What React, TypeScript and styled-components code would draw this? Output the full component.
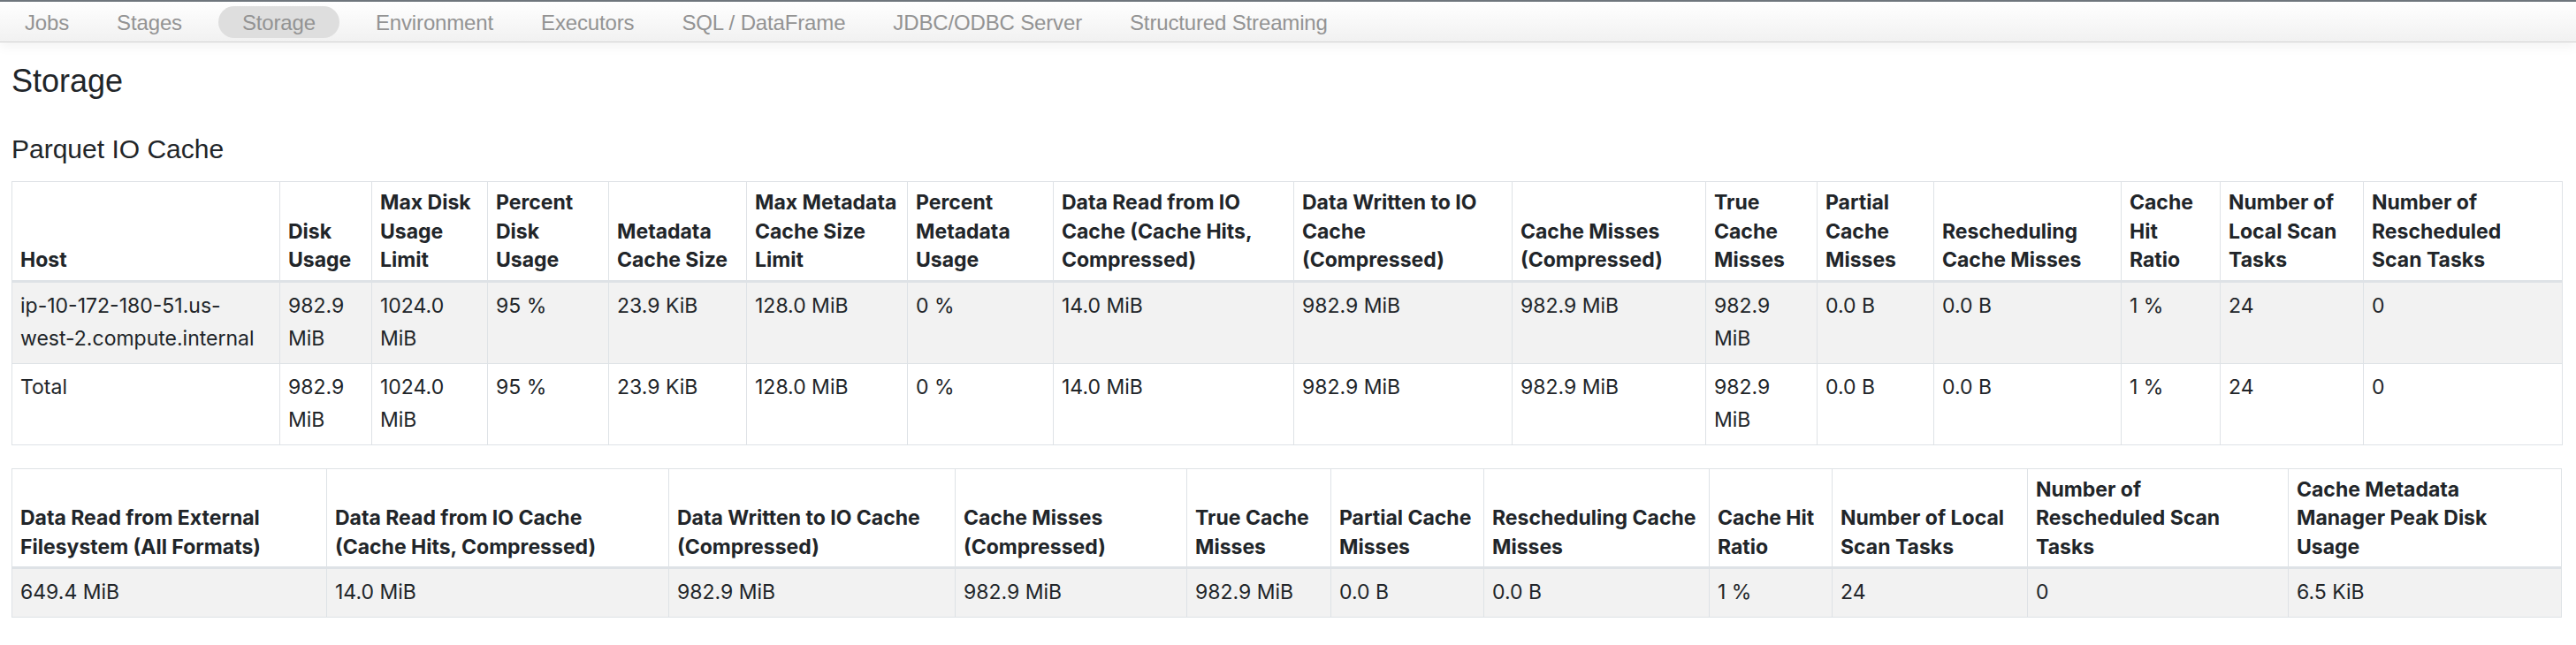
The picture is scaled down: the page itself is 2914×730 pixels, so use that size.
import React from "react";
import styled, { createGlobalStyle } from "styled-components";

const GlobalStyle = createGlobalStyle`
  html, body { margin: 0; padding: 0; background: #ffffff; }
  body { font-family: "Liberation Sans", Arial, sans-serif; color: #212529; }
`;

const TopBar = styled.nav`
  display: flex;
  align-items: center;
  height: 45px;
  padding-left: 1px;
  border-top: 2px solid #6f767d;
  border-bottom: 1px solid #d3d3d3;
  background: linear-gradient(to bottom, #ffffff 0%, #f1f1f1 100%);
  box-shadow: 0 5px 12px rgba(0, 0, 0, 0.05);
`;

const NavItem = styled.a<{ $active?: boolean }>`
  display: block;
  height: 36px;
  line-height: 38px;
  padding: 0 27px;
  margin: ${(p) => (p.$active ? "0 14px" : "0")};
  border-radius: 18px;
  background: ${(p) => (p.$active ? "#dedede" : "transparent")};
  font-family: "Liberation Sans", Arial, sans-serif;
  font-size: 24px;
  letter-spacing: -0.15px;
  color: #939393;
  text-decoration: none;
  white-space: nowrap;
`;

const Page = styled.main`
  padding: 0 16px 0 13px;
`;

const Title = styled.h3`
  margin: 22px 0 0;
  font-size: 36px;
  font-weight: 400;
  line-height: 43px;
`;

const SectionTitle = styled.h4`
  margin: 38px 0 18px;
  font-size: 30px;
  font-weight: 400;
  line-height: 36px;
`;

const DataTable = styled.table<{ $gap?: number }>`
  width: 100%;
  table-layout: fixed;
  border-collapse: collapse;
  border: 1px solid #dee2e6;
  margin-top: ${(p) => p.$gap ?? 0}px;
  font-family: Inter, "Noto Sans", sans-serif;
  font-size: 23px;
  color: #212529;
`;

const Col = styled.col<{ $w: number }>`
  width: ${(p) => p.$w}px;
`;

const HeadCell = styled.th`
  text-align: left;
  vertical-align: bottom;
  font-weight: 700;
  line-height: 32.5px;
  padding: 7px 9px 6px;
  border: 1px solid #dee2e6;
  border-bottom: 3px solid #dee2e6;
  white-space: nowrap;
`;

const BodyRow = styled.tr<{ $striped?: boolean }>`
  background: ${(p) => (p.$striped ? "#f2f2f2" : "#ffffff")};
`;

const Cell = styled.td`
  vertical-align: top;
  line-height: 37.5px;
  padding: 8px 9px;
  border: 1px solid #dee2e6;
  white-space: nowrap;
`;

type Lines = string | string[];

const Multi = ({ v }: { v: Lines }) => {
  const arr = Array.isArray(v) ? v : [v];
  return (
    <>
      {arr.map((l, i) => (
        <React.Fragment key={i}>
          {i > 0 && <br />}
          {l}
        </React.Fragment>
      ))}
    </>
  );
};

const navItems = [
  "Jobs",
  "Stages",
  "Storage",
  "Environment",
  "Executors",
  "SQL / DataFrame",
  "JDBC/ODBC Server",
  "Structured Streaming",
];

const t1Widths = [303, 104, 131, 137, 156, 182, 165, 272, 247, 219, 126, 132, 212, 112, 162, 225];
const t1Head: Lines[] = [
  ["Host"],
  ["Disk", "Usage"],
  ["Max Disk", "Usage", "Limit"],
  ["Percent", "Disk", "Usage"],
  ["Metadata", "Cache Size"],
  ["Max Metadata", "Cache Size", "Limit"],
  ["Percent", "Metadata", "Usage"],
  ["Data Read from IO", "Cache (Cache Hits,", "Compressed)"],
  ["Data Written to IO", "Cache", "(Compressed)"],
  ["Cache Misses", "(Compressed)"],
  ["True", "Cache", "Misses"],
  ["Partial", "Cache", "Misses"],
  ["Rescheduling", "Cache Misses"],
  ["Cache", "Hit", "Ratio"],
  ["Number of", "Local Scan", "Tasks"],
  ["Number of", "Rescheduled", "Scan Tasks"],
];
const t1Tail: Lines[] = [
  ["982.9", "MiB"],
  ["1024.0", "MiB"],
  "95 %",
  "23.9 KiB",
  "128.0 MiB",
  "0 %",
  "14.0 MiB",
  "982.9 MiB",
  "982.9 MiB",
  ["982.9", "MiB"],
  "0.0 B",
  "0.0 B",
  "1 %",
  "24",
  "0",
];
const t1Rows: Lines[][] = [
  [["ip-10-172-180-51.us-", "west-2.compute.internal"], ...t1Tail],
  ["Total", ...t1Tail],
];

const t2Widths = [356, 387, 324, 262, 163, 173, 255, 139, 221, 295, 309];
const t2Head: Lines[] = [
  ["Data Read from External", "Filesystem (All Formats)"],
  ["Data Read from IO Cache", "(Cache Hits, Compressed)"],
  ["Data Written to IO Cache", "(Compressed)"],
  ["Cache Misses", "(Compressed)"],
  ["True Cache", "Misses"],
  ["Partial Cache", "Misses"],
  ["Rescheduling Cache", "Misses"],
  ["Cache Hit", "Ratio"],
  ["Number of Local", "Scan Tasks"],
  ["Number of", "Rescheduled Scan", "Tasks"],
  ["Cache Metadata", "Manager Peak Disk", "Usage"],
];
const t2Rows: Lines[][] = [
  ["649.4 MiB", "14.0 MiB", "982.9 MiB", "982.9 MiB", "982.9 MiB", "0.0 B", "0.0 B", "1 %", "24", "0", "6.5 KiB"],
];

const Table = ({
  widths,
  head,
  rows,
  gap,
}: {
  widths: number[];
  head: Lines[];
  rows: Lines[][];
  gap?: number;
}) => (
  <DataTable $gap={gap}>
    <colgroup>
      {widths.map((w, i) => (
        <Col key={i} $w={w} />
      ))}
    </colgroup>
    <thead>
      <tr>
        {head.map((h, i) => (
          <HeadCell key={i}>
            <Multi v={h} />
          </HeadCell>
        ))}
      </tr>
    </thead>
    <tbody>
      {rows.map((r, ri) => (
        <BodyRow key={ri} $striped={ri % 2 === 0}>
          {r.map((c, ci) => (
            <Cell key={ci}>
              <Multi v={c} />
            </Cell>
          ))}
        </BodyRow>
      ))}
    </tbody>
  </DataTable>
);

export default function App() {
  return (
    <>
      <GlobalStyle />
      <TopBar>
        {navItems.map((n) => (
          <NavItem key={n} $active={n === "Storage"}>
            {n}
          </NavItem>
        ))}
      </TopBar>
      <Page>
        <Title>Storage</Title>
        <SectionTitle>Parquet IO Cache</SectionTitle>
        <Table widths={t1Widths} head={t1Head} rows={t1Rows} />
        <Table widths={t2Widths} head={t2Head} rows={t2Rows} gap={26} />
      </Page>
    </>
  );
}
